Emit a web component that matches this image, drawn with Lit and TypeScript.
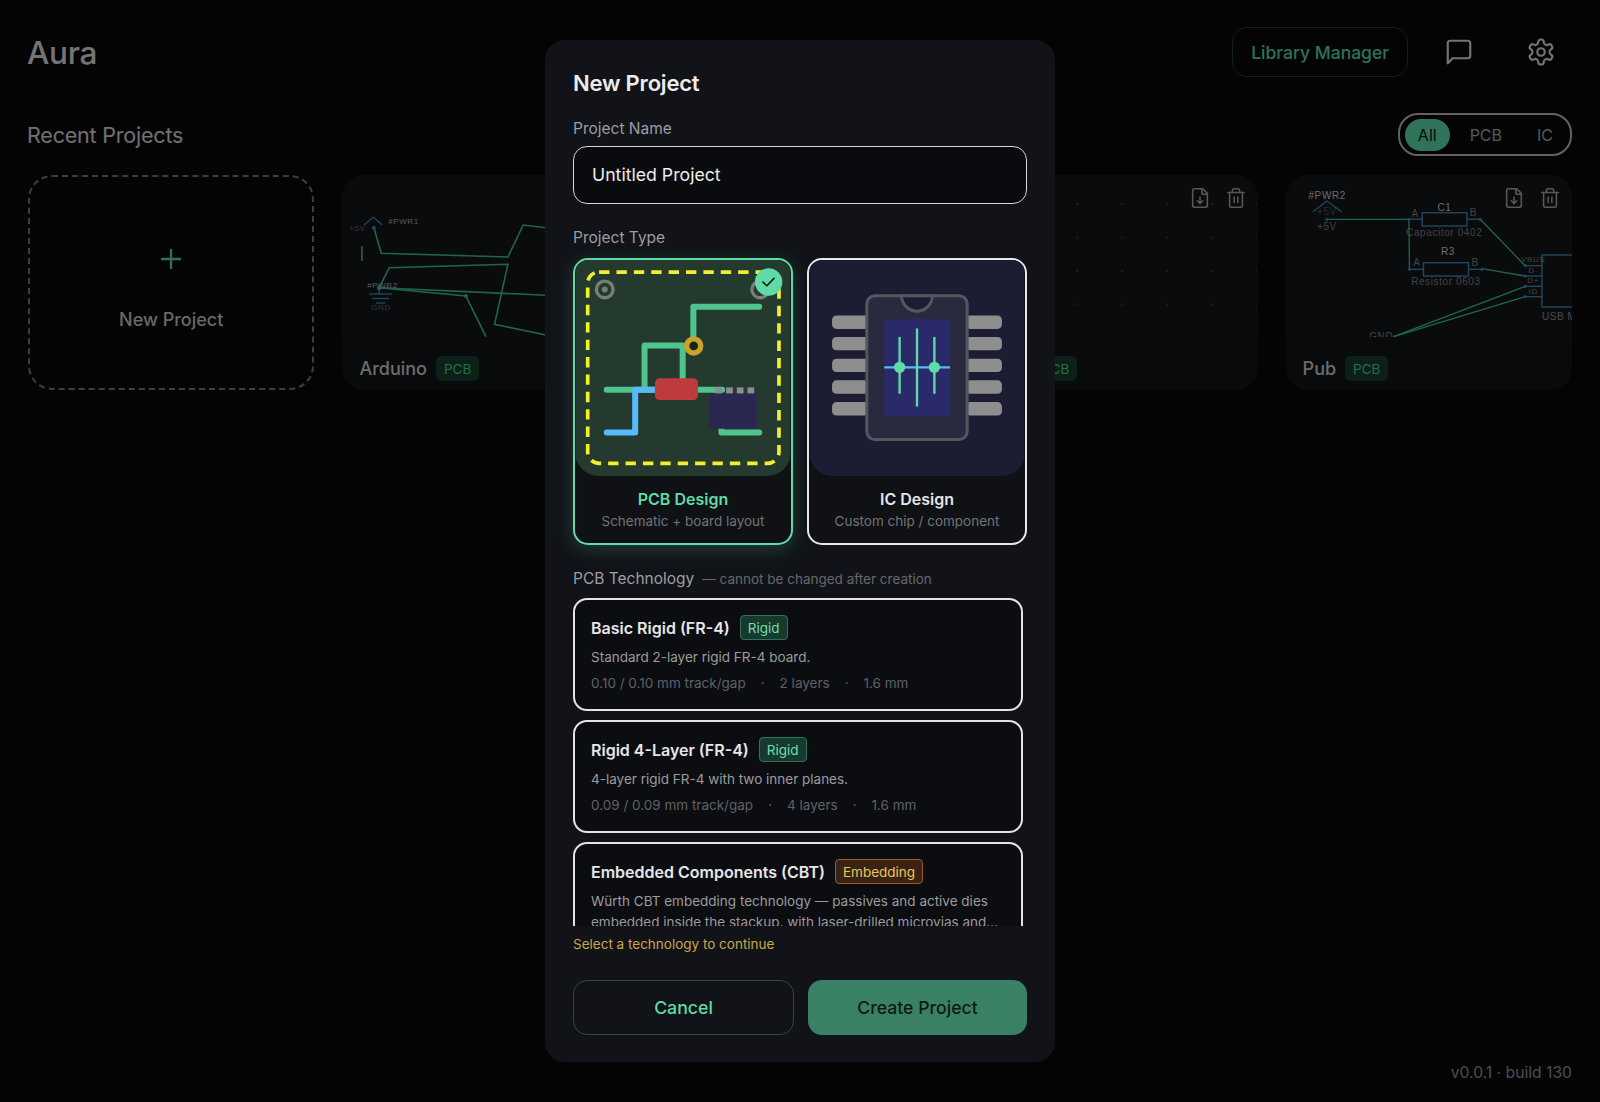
import { LitElement, html, css, svg } from "lit";
import { customElement } from "lit/decorators.js";

const iconFile = svg`<path d="M15 2H6a2 2 0 0 0-2 2v16a2 2 0 0 0 2 2h12a2 2 0 0 0 2-2V7z"/><path d="M14 2v4a2 2 0 0 0 2 2h4"/><path d="M12 11v7"/><path d="m9 15 3 3 3-3"/>`;
const iconTrash = svg`<path d="M3 6h18"/><path d="M19 6v14a2 2 0 0 1-2 2H7a2 2 0 0 1-2-2V6"/><path d="M8 6V4a2 2 0 0 1 2-2h4a2 2 0 0 1 2 2v2"/><line x1="10" x2="10" y1="11" y2="17"/><line x1="14" x2="14" y1="11" y2="17"/>`;

const WIRE = "#45c996";
const BLUE = "#3f8fc0";
const GREY = "#b4b4b4";

const arduinoThumb = svg`
  <svg class="thumb-svg" viewBox="343 174 286 162">
    <g fill="none" stroke="${WIRE}" stroke-width="1.6">
      <polyline points="374.7,226.7 382,252.3 508.7,256 524,224 600,233"/>
      <polyline points="380,286.7 390,266.7 508.7,263.3 495.3,323.3 600,345"/>
      <polyline points="380,286.7 466.7,295 486.7,335.7"/>
      <polyline points="380,286.7 629,298"/>
      <line x1="362.7" y1="245" x2="362.7" y2="260"/>
    </g>
    <g fill="none" stroke="${BLUE}" stroke-width="1.3">
      <polyline points="365,224 374,216 383,224"/>
      <line x1="370" y1="293" x2="393" y2="293"/>
      <line x1="373" y1="297.5" x2="390" y2="297.5"/>
      <line x1="377" y1="302" x2="386" y2="302"/>
      <line x1="380" y1="287" x2="380" y2="293"/>
    </g>
    <circle cx="374.7" cy="226.7" r="2" fill="${BLUE}"/>
    <circle cx="380" cy="286.7" r="2.4" fill="${WIRE}"/>
    <circle cx="466.7" cy="295" r="2" fill="${WIRE}"/>
    <g class="sch small" fill="${GREY}">
      <text x="389" y="223">#PWR1</text>
      <text x="368" y="287">#PWR2</text>
      <text x="350" y="230" opacity=".5">+5V</text>
      <text x="372" y="309" opacity=".5">GND</text>
    </g>
  </svg>`;

const emptyThumb = svg`
  <svg class="thumb-svg" viewBox="0 0 286 162">
    <defs>
      <pattern id="dots" width="45" height="33.5" patternUnits="userSpaceOnUse" x="15" y="28">
        <circle cx="1" cy="1" r="1" fill="#3a4240"/>
      </pattern>
    </defs>
    <rect width="286" height="162" fill="url(#dots)"/>
  </svg>`;

const pubThumb = svg`
  <svg class="thumb-svg" viewBox="1286 174 286 162">
    <g fill="none" stroke="${WIRE}" stroke-width="1.3">
      <line x1="1326.7" y1="218.3" x2="1408.7" y2="218.3"/>
      <line x1="1408.7" y1="218.3" x2="1409.3" y2="268.3"/>
      <line x1="1480" y1="218.3" x2="1525" y2="264.7"/>
      <line x1="1481.7" y1="267.7" x2="1525" y2="275"/>
      <line x1="1393.3" y1="335.7" x2="1525" y2="285.3"/>
      <line x1="1393.3" y1="335.7" x2="1525" y2="295.7"/>
    </g>
    <g fill="none" stroke="${BLUE}" stroke-width="1.4">
      <polyline points="1312.7,210.7 1326.7,200 1341.3,210.7"/>
      <rect x="1422" y="211.7" width="44.7" height="13.3"/>
      <rect x="1423.3" y="261.7" width="45" height="13.3"/>
      <line x1="1408.7" y1="218.3" x2="1422" y2="218.3"/>
      <line x1="1466.7" y1="218.3" x2="1480" y2="218.3"/>
      <line x1="1409.3" y1="268.3" x2="1423.3" y2="268.3"/>
      <line x1="1468.3" y1="268.3" x2="1481.7" y2="268.3"/>
      <line x1="1525" y1="264.7" x2="1541.7" y2="264.7"/>
      <line x1="1525" y1="275" x2="1541.7" y2="275"/>
      <line x1="1525" y1="285.3" x2="1541.7" y2="285.3"/>
      <line x1="1525" y1="295.7" x2="1541.7" y2="295.7"/>
      <rect x="1541.7" y="254" width="60" height="52"/>
    </g>
    <g fill="${BLUE}">
      <circle cx="1326.7" cy="218.3" r="1.6"/><circle cx="1408.7" cy="218.3" r="1.6"/>
      <circle cx="1480" cy="218.3" r="1.6"/><circle cx="1409.3" cy="268.3" r="1.6"/>
      <circle cx="1481.7" cy="268.3" r="1.6"/><circle cx="1525" cy="264.7" r="1.6"/>
      <circle cx="1525" cy="275" r="1.6"/><circle cx="1525" cy="285.3" r="1.6"/>
      <circle cx="1525" cy="295.7" r="1.6"/>
    </g>
    <g class="sch" fill="${GREY}" text-anchor="middle">
      <text x="1327" y="197.5" fill="#d8d8d8">#PWR2</text>
      <text x="1326.7" y="214" opacity=".4">+5V</text>
      <text x="1326.7" y="229" opacity=".7">+5V</text>
      <text x="1444.3" y="209.5" fill="#d8d8d8">C1</text>
      <text x="1447.7" y="254" fill="#d8d8d8">R3</text>
      <text x="1415" y="216" opacity=".7">A</text>
      <text x="1473.3" y="215" opacity=".7">B</text>
      <text x="1416.7" y="265" opacity=".7">A</text>
      <text x="1475" y="265" opacity=".7">B</text>
      <text x="1444" y="234.5" opacity=".7">Capacitor 0402</text>
      <text x="1445.7" y="283.5" opacity=".7">Resistor 0603</text>
      <text x="1533" y="261" opacity=".7" class="pin">VBUS</text>
      <text x="1533" y="272" opacity=".7" class="pin">D-</text>
      <text x="1533" y="282" opacity=".7" class="pin">D+</text>
      <text x="1533" y="293" opacity=".7" class="pin">ID</text>
      <text x="1541.7" y="319" opacity=".8" text-anchor="start">USB M</text>
      <text x="1381" y="339" opacity=".7">GND</text>
    </g>
  </svg>`;

const pcbArt = svg`
  <svg class="type-art" viewBox="48 62 642 646">
    <rect x="48" y="62" width="642" height="646" fill="#243a2f"/>
    <rect x="84" y="98" width="572" height="572" rx="34" fill="none" stroke="#f4ef2c" stroke-width="11" stroke-dasharray="31 21"/>
    <g fill="none" stroke="#767f78" stroke-width="10">
      <circle cx="135" cy="150" r="25"/>
      <circle cx="600" cy="150" r="25"/>
    </g>
    <circle cx="135" cy="150" r="9" fill="#767f78"/>
    <g fill="none" stroke="#4fc48c" stroke-width="18" stroke-linecap="round" stroke-linejoin="round">
      <polyline points="400,318 400,202 597,202"/>
      <polyline points="254,445 254,318 368,318 368,420"/>
      <line x1="141" y1="450" x2="285" y2="450"/>
      <line x1="414" y1="450" x2="486" y2="450"/>
      <polyline points="484,568 484,578 597,578"/>
    </g>
    <polyline points="141,578 226,578 226,450 285,450" fill="none" stroke="#58b9fb" stroke-width="18" stroke-linecap="round" stroke-linejoin="round"/>
    <circle cx="401" cy="319" r="21" fill="#16241c" stroke="#c9a227" stroke-width="16"/>
    <rect x="285" y="416" width="129" height="65" rx="14" fill="#be3b3b"/>
    <rect x="447" y="460" width="143" height="107" rx="6" fill="#2a2850"/>
    <g fill="#8d8d8d">
      <rect x="466" y="443" width="20" height="18"/>
      <rect x="498" y="443" width="20" height="18"/>
      <rect x="530" y="443" width="20" height="18"/>
      <rect x="562" y="443" width="20" height="18"/>
    </g>
    <circle cx="625" cy="128" r="41" fill="#5fdba7"/>
    <polyline points="608,128 620,139 641,117" fill="none" stroke="#10201a" stroke-width="5" stroke-linecap="round" stroke-linejoin="round"/>
  </svg>`;

const pinYs = [228, 292, 357, 422, 487];
const icArt = svg`
  <svg class="type-art" viewBox="30 62 642 646">
    <rect x="30" y="62" width="642" height="646" fill="#1c1c33"/>
    <g fill="#8e8e8e">
      ${pinYs.map((y) => svg`<rect x="97" y="${y}" width="110" height="40" rx="13"/><rect x="497" y="${y}" width="108" height="40" rx="13"/>`)}
    </g>
    <rect x="201" y="169" width="300" height="430" rx="24" fill="#2a2a3e" stroke="#565660" stroke-width="9"/>
    <path d="M305 169 A46 46 0 0 0 397 169 Z" fill="#1c1c33" stroke="#565660" stroke-width="9"/>
    <rect x="253" y="240" width="197" height="288" rx="8" fill="#2a2a6a"/>
    <line x1="253" y1="383" x2="450" y2="383" stroke="#58b9fb" stroke-width="7"/>
    <g stroke="#5fdba7" stroke-width="7">
      <line x1="299" y1="292" x2="299" y2="462"/>
      <line x1="351" y1="267" x2="351" y2="500"/>
      <line x1="403" y1="292" x2="403" y2="462"/>
    </g>
    <circle cx="299" cy="383" r="17" fill="#5fdba7"/>
    <circle cx="403" cy="383" r="17" fill="#5fdba7"/>
  </svg>`;

interface Tech {
  name: string;
  tag: string;
  warm?: boolean;
  desc: string;
  specs?: string[];
}

const techs: Tech[] = [
  {
    name: "Basic Rigid (FR-4)",
    tag: "Rigid",
    desc: "Standard 2-layer rigid FR-4 board.",
    specs: ["0.10 / 0.10 mm track/gap", "2 layers", "1.6 mm"],
  },
  {
    name: "Rigid 4-Layer (FR-4)",
    tag: "Rigid",
    desc: "4-layer rigid FR-4 with two inner planes.",
    specs: ["0.09 / 0.09 mm track/gap", "4 layers", "1.6 mm"],
  },
  {
    name: "Embedded Components (CBT)",
    tag: "Embedding",
    warm: true,
    desc: "Würth CBT embedding technology — passives and active dies embedded inside the stackup, with laser-drilled microvias and copper-filled connections throughout.",
  },
];

const projects = [
  { name: "Arduino", thumb: arduinoThumb },
  { name: "", thumb: emptyThumb },
  { name: "Test", thumb: emptyThumb },
  { name: "Pub", thumb: pubThumb },
];

@customElement("app-root")
export class AppRoot extends LitElement {
  static styles = css`
    :host {
      display: block;
      height: 1102px;
      position: relative;
      overflow: hidden;
      background: #08090b;
      font-family: Inter, "Liberation Sans", sans-serif;
      color: #e8e8e8;
    }
    * { box-sizing: border-box; }
    .page { padding: 27px 28px 0; height: 100%; position: relative; }
    .head { display: flex; align-items: center; gap: 20px; height: 50px; }
    .logo { font-size: 31.5px; font-weight: 500; margin-right: auto; margin-left: -1px; letter-spacing: -0.3px; }
    .lib {
      height: 50px; padding: 0 18px; display: flex; align-items: center;
      border: 1.5px solid #164a38; border-radius: 15px;
      color: #5fe0b0; font-size: 17.5px; font-weight: 500;
    }
    .icon-btn { width: 62px; height: 50px; display: flex; align-items: center; justify-content: center; color: #e8e8e8; }
    .icon-btn svg { width: 30px; height: 30px; fill: none; stroke: currentColor; stroke-width: 1.7; stroke-linecap: round; stroke-linejoin: round; }
    .recent { display: flex; align-items: center; justify-content: space-between; margin-top: 36px; }
    .recent h2 { margin: 0 0 0 -1px; font-size: 21.5px; font-weight: 400; color: #e0e0e0; letter-spacing: -0.2px; }
    .filter { display: flex; align-items: center; gap: 8px; height: 43px; padding: 0 5px; border: 2px solid #c4c4c4; border-radius: 20px; }
    .filter span { height: 32px; padding: 0 12px; display: flex; align-items: center; border-radius: 16px; font-size: 16px; color: #b0b0b0; }
    .filter .on { background: #5fe8b4; color: #0a1612; padding: 0 13px; }
    .filter span:last-child { margin-left: 3px; }
    .grid { display: grid; grid-template-columns: repeat(5, 1fr); gap: 28px; margin-top: 19px; }
    .new {
      height: 215px; border: 2px dashed #7c7c7c; border-radius: 24px; padding-top: 13px;
      display: flex; flex-direction: column; align-items: center; justify-content: center; gap: 37px;
      font-size: 18px; font-weight: 500; color: #cfcfcf; line-height: 24px;
    }
    .new svg { width: 24px; height: 24px; stroke: #5fe0b0; stroke-width: 2.4; fill: none; stroke-linecap: round; }
    .card { height: 215px; background: #121519; border-radius: 22px; overflow: hidden; position: relative; }
    .thumb { height: 162px; position: relative; background: #14171b; }
    .thumb-svg { display: block; width: 100%; height: 100%; }
    .sch { font: 10px "Liberation Sans", sans-serif; letter-spacing: 0.6px; }
    .sch.small { font-size: 8px; }
    .sch .pin { font-size: 8px; }
    .tools { position: absolute; top: 12px; right: 11px; display: flex; gap: 14px; color: #b0b0b0; }
    .tools svg { width: 22px; height: 22px; fill: none; stroke: currentColor; stroke-width: 1.7; stroke-linecap: round; stroke-linejoin: round; }
    .meta { display: flex; align-items: center; gap: 9px; padding: 19px 17px 8px; }
    .meta .name { font-size: 18px; font-weight: 500; color: #d8d8d8; }
    .pill { height: 25px; padding: 0 8px; display: flex; align-items: center; border-radius: 5px; background: #17402c; color: #55d59a; font-size: 13.5px; }
    .version { position: absolute; right: 28px; bottom: 20px; font-size: 15.7px; color: #9a9a9a; }

    .overlay { position: absolute; inset: 0; background: rgba(0, 0, 0, 0.5); display: flex; align-items: center; justify-content: center; }
    .modal { width: 510px; height: 1022px; background: #111318; border-radius: 20px; padding: 28px 28px 27px; display: flex; flex-direction: column; }
    .modal h1 { margin: 0; font-size: 22px; line-height: 30px; font-weight: 600; color: #ececec; letter-spacing: -0.2px; }
    .lbl { font-size: 15.5px; line-height: 20px; color: #9c9ea2; }
    .l1 { margin-top: 21px; }
    .input {
      margin-top: 7px; height: 57.5px; padding: 0 18px; display: flex; align-items: center;
      background: #0a0b0e; border: 1.5px solid #d6d6d6; border-radius: 14px; font-size: 17.7px; color: #ececec;
    }
    .l2 { margin-top: 24.5px; }
    .types { display: grid; grid-template-columns: 1fr 1fr; gap: 14px; margin-top: 9.5px; }
    .type { height: 287px; border: 2.5px solid #e8e8e8; border-radius: 15px; background: #0f1115; overflow: hidden; text-align: center; }
    .type.sel { border-color: #5fdba7; box-shadow: 0 4px 18px rgba(95, 219, 167, 0.22); background: #0f1115; }
    .art { height: 216px; border-radius: 12px 12px 24px 24px; overflow: hidden; }
    .type-art { display: block; width: 100%; height: 100%; }
    .type b { display: block; margin-top: 13px; font-size: 16px; line-height: 20px; font-weight: 600; color: #e4e4e8; }
    .type.sel b { color: #5fdba7; }
    .type small { display: block; margin-top: 3px; font-size: 13.5px; line-height: 18px; color: #717378; }
    .techhead { margin-top: 24.5px; display: flex; align-items: baseline; gap: 8px; }
    .techhead em { font-style: normal; font-size: 13.5px; color: #66686d; }
    .list { margin-top: 9px; height: 328px; overflow: hidden; display: flex; flex-direction: column; gap: 9px; padding-right: 4px; flex: none; }
    .tech { flex: none; height: 113px; border: 2.5px solid #e4e4e4; border-radius: 14px; background: #0c0d11; padding: 15px 16px 0; }
    .tech.long { height: auto; padding-bottom: 14px; }
    .tt { display: flex; align-items: center; gap: 10px; height: 25px; }
    .tt strong { font-size: 16px; font-weight: 600; color: #e6e6e8; }
    .tag { height: 25px; padding: 0 7px; display: flex; align-items: center; border-radius: 4px; font-size: 13.5px; background: #173a2e; border: 1px solid #2c7459; color: #74dcae; }
    .tag.warm { background: #3a2215; border-color: #a0582a; color: #e8c85a; }
    .desc { margin-top: 7px; font-size: 13.5px; line-height: 21px; color: #9b9b9e; display: -webkit-box; -webkit-line-clamp: 2; -webkit-box-orient: vertical; overflow: hidden; }
    .specs { margin-top: 5px; display: flex; gap: 15px; font-size: 13.5px; line-height: 21px; color: #5f6166; }
    .warn { margin-top: 8px; font-size: 13.5px; line-height: 20px; color: #c9a648; }
    .btns { margin-top: 26px; display: grid; grid-template-columns: 221px 1fr; gap: 14px; }
    .btns div { height: 55px; display: flex; align-items: center; justify-content: center; border-radius: 14px; font-size: 17.7px; font-weight: 500; }
    .cancel { border: 1.5px solid #234f41; color: #5fdba7; }
    .create { background: #3a8064; color: #0e1a16; }
  `;

  render() {
    return html`
      <div class="page">
        <div class="head">
          <div class="logo">Aura</div>
          <div class="lib">Library Manager</div>
          <div class="icon-btn"><svg viewBox="0 0 24 24"><path d="M21 15a2 2 0 0 1-2 2H7l-4 4V5a2 2 0 0 1 2-2h14a2 2 0 0 1 2 2z"/></svg></div>
          <div class="icon-btn"><svg viewBox="0 0 24 24"><path d="M12.22 2h-.44a2 2 0 0 0-2 2v.18a2 2 0 0 1-1 1.73l-.43.25a2 2 0 0 1-2 0l-.15-.08a2 2 0 0 0-2.73.73l-.22.38a2 2 0 0 0 .73 2.73l.15.1a2 2 0 0 1 1 1.72v.51a2 2 0 0 1-1 1.74l-.15.09a2 2 0 0 0-.73 2.73l.22.38a2 2 0 0 0 2.73.73l.15-.08a2 2 0 0 1 2 0l.43.25a2 2 0 0 1 1 1.73V20a2 2 0 0 0 2 2h.44a2 2 0 0 0 2-2v-.18a2 2 0 0 1 1-1.73l.43-.25a2 2 0 0 1 2 0l.15.08a2 2 0 0 0 2.73-.73l.22-.39a2 2 0 0 0-.73-2.73l-.15-.08a2 2 0 0 1-1-1.74v-.5a2 2 0 0 1 1-1.74l.15-.09a2 2 0 0 0 .73-2.73l-.22-.38a2 2 0 0 0-2.73-.73l-.15.08a2 2 0 0 1-2 0l-.43-.25a2 2 0 0 1-1-1.73V4a2 2 0 0 0-2-2z"/><circle cx="12" cy="12" r="3"/></svg></div>
        </div>
        <div class="recent">
          <h2>Recent Projects</h2>
          <div class="filter"><span class="on">All</span><span>PCB</span><span>IC</span></div>
        </div>
        <div class="grid">
          <div class="new">
            <svg viewBox="0 0 24 24"><path d="M12 3v18M3 12h18"/></svg>
            <span>New Project</span>
          </div>
          ${projects.map(
            (p) => html`
              <div class="card">
                <div class="thumb">
                  ${p.thumb}
                  <div class="tools">
                    <svg viewBox="0 0 24 24">${iconFile}</svg>
                    <svg viewBox="0 0 24 24">${iconTrash}</svg>
                  </div>
                </div>
                <div class="meta">
                  <span class="name">${p.name}</span>
                  <span class="pill">PCB</span>
                </div>
              </div>
            `
          )}
        </div>
        <div class="version">v0.0.1 · build 130</div>
      </div>

      <div class="overlay">
        <div class="modal">
          <h1>New Project</h1>
          <div class="lbl l1">Project Name</div>
          <div class="input">Untitled Project</div>
          <div class="lbl l2">Project Type</div>
          <div class="types">
            <div class="type sel">
              <div class="art">${pcbArt}</div>
              <b>PCB Design</b>
              <small>Schematic + board layout</small>
            </div>
            <div class="type">
              <div class="art">${icArt}</div>
              <b>IC Design</b>
              <small>Custom chip / component</small>
            </div>
          </div>
          <div class="techhead lbl">PCB Technology <em>— cannot be changed after creation</em></div>
          <div class="list">
            ${techs.map(
              (t) => html`
                <div class="tech ${t.specs ? "" : "long"}">
                  <div class="tt"><strong>${t.name}</strong><span class="tag ${t.warm ? "warm" : ""}">${t.tag}</span></div>
                  <div class="desc">${t.desc}</div>
                  ${t.specs
                    ? html`<div class="specs">${t.specs.map((s, i) => html`${i ? html`<span>·</span>` : ""}<span>${s}</span>`)}</div>`
                    : ""}
                </div>
              `
            )}
          </div>
          <div class="warn">Select a technology to continue</div>
          <div class="btns">
            <div class="cancel">Cancel</div>
            <div class="create">Create Project</div>
          </div>
        </div>
      </div>
    `;
  }
}
